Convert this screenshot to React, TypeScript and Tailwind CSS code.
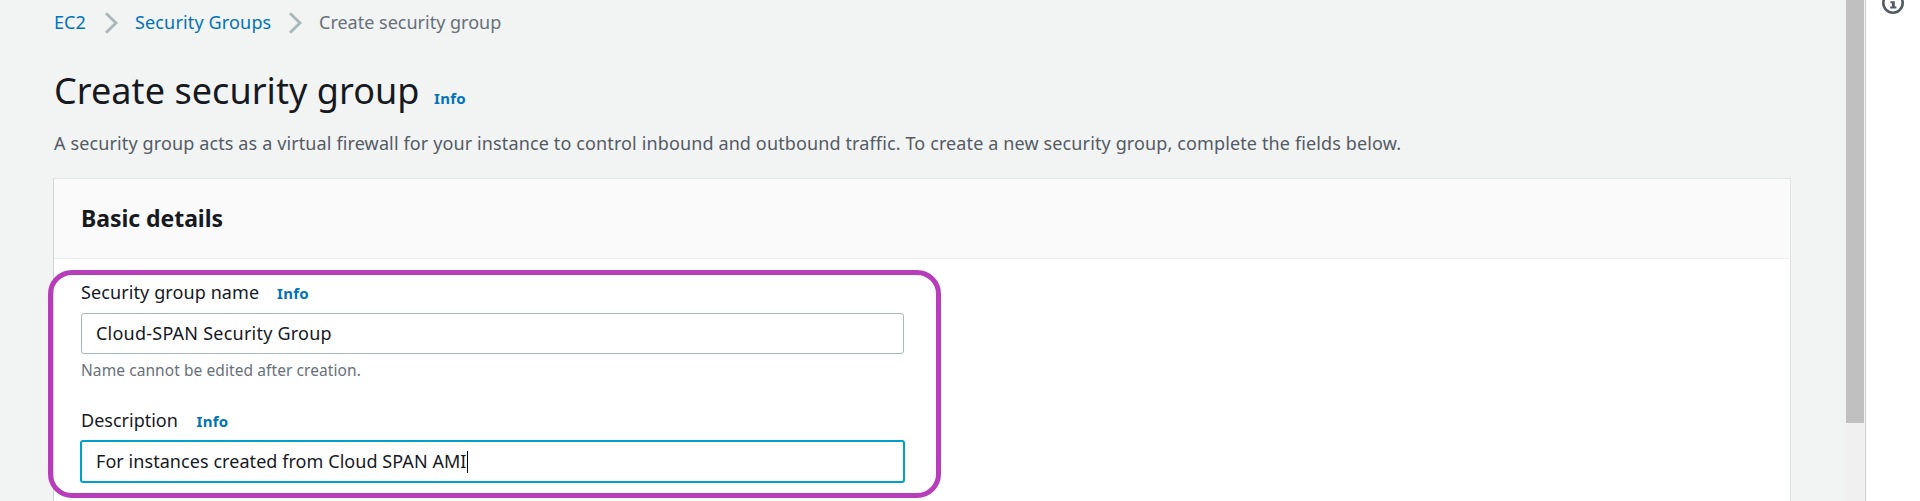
function Chevron() {
  return (
    <svg className="h-[24px] w-[16px] shrink-0" viewBox="0 0 16 24" fill="none" stroke="#aab7b8" strokeWidth="2.8">
      <path d="M2 3.2 L12 13 L2 22.8" />
    </svg>
  );
}

function InfoLink({ className = '' }: { className?: string }) {
  return <a className={`text-[15px] font-bold tracking-[0.3px] text-[#0073bb] ${className}`}>Info</a>;
}

function Breadcrumbs() {
  return (
    <nav className="flex h-7 items-center pl-px text-[18px] leading-7">
      <a className="w-[50px] text-[#0073bb]">EC2</a>
      <Chevron />
      <a className="ml-[15px] w-[153px] tracking-[0.15px] text-[#0073bb]">Security Groups</a>
      <Chevron />
      <span className="ml-[15px] text-[#687078]">Create security group</span>
    </nav>
  );
}

export default function App() {
  return (
    <div className="flex h-[501px] w-full overflow-hidden bg-[#f2f3f3] font-['Noto_Sans','Open_Sans',sans-serif] text-[18px] text-[#16191f]">
      <main className="w-[1844px] shrink-0 pl-[53px] pr-[53px] pt-2">
        <Breadcrumbs />
        <div className="mt-[31px] flex h-12 items-baseline pl-px leading-[48px]">
          <h1 className="w-[380px] text-[36px] tracking-[0.05px]">Create security group</h1>
          <InfoLink />
        </div>
        <p className="mt-[14px] h-7 whitespace-nowrap pl-px leading-7 tracking-[0.125px] text-[#545b64]">
          A security group acts as a virtual firewall for your instance to control inbound and outbound traffic. To create a new security group, complete the fields below.
        </p>

        <section className="mt-[21px] h-[400px] border border-[#e3e5e5] border-l-[#cfd3d3] bg-white">
          <header className="flex h-[80px] items-center border-b border-[#eaeded] bg-[#fafafa] pl-[27px]">
            <h2 className="text-[23px] font-bold tracking-[-0.05px]">Basic details</h2>
          </header>

          <div className="relative flex flex-col pl-[27px] pt-[19px]">
            <div className="pointer-events-none absolute -left-[6px] top-[11px] h-[228px] w-[893px] rounded-[24px] border-[5px] border-[#b83dba]" />
            <div className="flex h-7 items-baseline leading-7">
              <label className="w-[196px] tracking-[0.1px]">Security group name</label>
              <InfoLink />
            </div>
            <div className="mt-[7px] flex h-[41px] w-[823px] items-center rounded-[3px] border border-[#aab7b8] bg-white pb-px pl-[14px] tracking-[0.23px]">
              Cloud-SPAN Security Group
            </div>
            <p className="mt-1 h-6 text-[15.5px] leading-6 tracking-[0.08px] text-[#687078]">Name cannot be edited after creation.</p>
            <div className="mt-6 flex h-7 items-baseline leading-7">
              <label className="w-[115.5px]">Description</label>
              <InfoLink />
            </div>
            <div className="-ml-px mt-[6px] flex h-[43px] w-[825px] items-center rounded-[3px] border-2 border-[#00a1c9] bg-white pl-[14px] tracking-[0.06px]">
              For instances created from Cloud SPAN AMI
              <span className="h-[22px] w-px bg-black" />
            </div>
          </div>
        </section>
      </main>

      <div className="w-[21px] shrink-0 bg-[#f0f0f0] pl-[2px]">
        <div className="h-[423px] w-[18px] bg-[#c0c0c0]" />
      </div>

      <aside className="flex flex-1 justify-center border-l border-[#d0d0d0] bg-white">
        <svg className="-mt-[9px] h-6 w-6" viewBox="0 0 24 24" fill="none">
          <circle cx="12" cy="12" r="9.7" stroke="#545b64" strokeWidth="2.6" />
          <path d="M10.7 5.6h3v2.6h-3zM9.4 10.3h4.4v5.2h1.6v2H9.2v-2h1.7v-3.2H9.4z" fill="#545b64" />
        </svg>
      </aside>
    </div>
  );
}
